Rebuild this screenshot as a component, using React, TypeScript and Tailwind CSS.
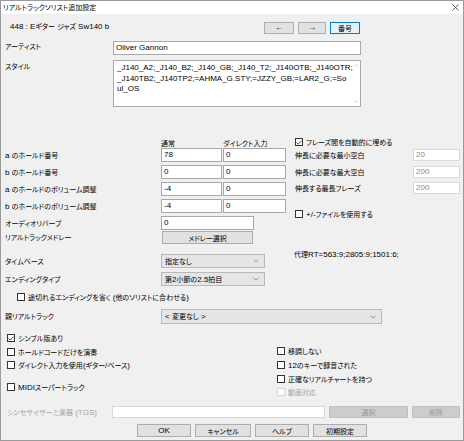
import React from 'react';

const CJK = /([\u3000-\u30ff\u3400-\u9fff\uff00-\uffef]+)/;

// Japanese runs get the narrower CJK face, Latin stays in Liberation Sans
const T = ({ s }: { s: string }) => (
  <>
    {s.split(CJK).map((part, i) =>
      i % 2 === 1 ? (
        <span key={i} className="font-['Noto_Sans_CJK_JP'] text-[7px] [font-feature-settings:'palt']">
          {part}
        </span>
      ) : (
        <React.Fragment key={i}>{part}</React.Fragment>
      ),
    )}
  </>
);

const Check = ({
  label,
  checked = false,
  disabled = false,
  className = '',
}: {
  label: string;
  checked?: boolean;
  disabled?: boolean;
  className?: string;
}) => (
  <div className={`flex items-center h-[10px] ${className}`}>
    <span
      className={`w-[8px] h-[8px] border bg-white flex items-center justify-center shrink-0 ${
        disabled ? 'border-[#d6d6d6]' : 'border-[#333333]'
      }`}
    >
      {checked && (
        <svg width="6" height="5" viewBox="0 0 6 5">
          <path d="M0.4 2.4 L2.2 4.2 L5.6 0.6" stroke="#333" fill="none" strokeWidth="0.9" />
        </svg>
      )}
    </span>
    <span className={`ml-[3px] whitespace-nowrap ${disabled ? 'text-[#a3a3a3]' : ''}`}>
      <T s={label} />
    </span>
  </div>
);

const Field = ({
  value = '',
  className = '',
  dim = false,
}: {
  value?: string;
  className?: string;
  dim?: boolean;
}) => (
  <div
    className={`bg-white border flex items-center pl-[2px] shrink-0 ${
      dim ? 'border-[#d9d9d9] text-[#8a8a8a]' : 'border-[#a8a8a8]'
    } ${className}`}
  >
    {value}
  </div>
);

const Btn = ({
  label,
  className = '',
  disabled = false,
  focus = false,
}: {
  label: string;
  className?: string;
  disabled?: boolean;
  focus?: boolean;
}) => (
  <div
    className={`flex items-center justify-center border shrink-0 ${
      disabled
        ? 'bg-[#cccccc] border-[#bfbfbf] text-[#9a9a9a]'
        : focus
          ? 'bg-[#e5f1fb] border-[#0078d7]'
          : 'bg-[#e1e1e1] border-[#adadad]'
    } ${className}`}
  >
    <T s={label} />
  </div>
);

const Chevron = () => (
  <svg width="6" height="4" viewBox="0 0 6 4" className="shrink-0">
    <path d="M0.6 0.8 L3 3.1 L5.4 0.8" stroke="#808080" fill="none" strokeWidth="0.8" />
  </svg>
);

const Select = ({ value, className = '' }: { value: string; className?: string }) => (
  <div
    className={`bg-[#e5e5e5] border border-[#b9b9b9] flex items-center justify-between pl-[3px] pr-[5px] shrink-0 ${className}`}
  >
    <span className="whitespace-nowrap">
      <T s={value} />
    </span>
    <Chevron />
  </div>
);

const Label = ({ s, className = '' }: { s: string; className?: string }) => (
  <div className={`shrink-0 whitespace-nowrap ${className}`}>
    <T s={s} />
  </div>
);

const holdRows = [
  { label: 'a のホールド番号', a: '78', b: '0' },
  { label: 'b のホールド番号', a: '0', b: '0' },
  { label: 'a のホールドのボリューム調整', a: '-4', b: '0' },
  { label: 'b のホールドのボリューム調整', a: '-4', b: '0' },
];

const stretchRows = [
  { label: '伸長に必要な最小空白', value: '20', mt: 'mt-[2px]' },
  { label: '伸長に必要な最大空白', value: '200', mt: 'mt-[5px]' },
  { label: '伸長する最長フレーズ', value: '200', mt: 'mt-[4px]' },
];

export default function App() {
  return (
    <div className="w-[464px] h-[441px] bg-[#f0f0f0] border border-[#9a9a9a] font-['Liberation_Sans','Noto_Sans_CJK_JP',sans-serif] text-[8px] leading-[8px] text-black flex flex-col overflow-hidden">
      {/* Title bar */}
      <div className="h-[13px] bg-white flex items-center justify-between pl-[2px] pr-[4px] shrink-0">
        <Label s="リアルトラックソリスト追加設定" />
        <svg width="7" height="7" viewBox="0 0 7 7">
          <path d="M0.5 0.5 L6.5 6.5 M6.5 0.5 L0.5 6.5" stroke="#333" strokeWidth="0.8" />
        </svg>
      </div>

      {/* Song line + nav buttons */}
      <div className="flex items-start pl-[9px] mt-[8px] h-[12px]">
        <Label s="448 : Eギター ジャズ Sw140 b" className="w-[254px]" />
        <Btn label="←" className="w-[30px] h-[12px]" />
        <Btn label="→" className="w-[28px] h-[12px] ml-[4px]" />
        <Btn label="番号" focus className="w-[30px] h-[12px] ml-[4px]" />
      </div>

      {/* Artist */}
      <div className="flex items-start pl-[4px] mt-[7px]">
        <Label s="アーティスト" className="w-[108px] pt-[1px]" />
        <Field value="Oliver Gannon" className="w-[248px] h-[14px]" />
      </div>

      {/* Style */}
      <div className="flex items-start pl-[4px] mt-[5px]">
        <Label s="スタイル" className="w-[108px] pt-[2px]" />
        <div className="w-[248px] h-[47px] bg-white border border-[#a8a8a8] flex">
          <div className="flex-1 pl-[3px] pt-[2px] leading-[10.5px] whitespace-nowrap">
            <div>_J140_A2;_J140_B2;_J140_GB;_J140_T2;_J140OTB;_J140OTR;</div>
            <div>_J140TB2;_J140TP2;=AHMA_G.STY;=JZZY_GB;=LAR2_G;=So</div>
            <div>ul_OS</div>
          </div>
          <div className="w-[9px] flex flex-col items-center justify-between py-[3px]">
            <svg width="5" height="3" viewBox="0 0 5 3">
              <path d="M0.5 2.5 L2.5 0.6 L4.5 2.5" stroke="#c2c2c2" fill="none" strokeWidth="0.8" />
            </svg>
            <svg width="5" height="3" viewBox="0 0 5 3">
              <path d="M0.5 0.5 L2.5 2.4 L4.5 0.5" stroke="#c2c2c2" fill="none" strokeWidth="0.8" />
            </svg>
          </div>
        </div>
      </div>

      {/* Middle two columns */}
      <div className="flex items-start">
        <div className="w-[293px] shrink-0 flex flex-col">
          <div className="flex pl-[160px] mt-[32px] h-[8px]">
            <Label s="通常" className="w-[62px]" />
            <Label s="ダイレクト入力" />
          </div>
          {holdRows.map((r, i) => (
            <div key={r.label} className={`flex items-center pl-[4px] ${i === 0 ? 'mt-[1px]' : 'mt-[3px]'}`}>
              <Label s={r.label} className="w-[156px]" />
              <Field value={r.a} className="w-[61px] h-[14px]" />
              <Field value={r.b} className="w-[63px] h-[14px] ml-[1px]" />
            </div>
          ))}
          <div className="flex items-center pl-[4px] mt-[3px]">
            <Label s="オーディオリバーブ" className="w-[156px]" />
            <Field value="0" className="w-[93px] h-[14px]" />
          </div>
          <div className="flex items-center pl-[4px] mt-[1px]">
            <Label s="リアルトラックメドレー" className="w-[157px]" />
            <Btn label="メドレー選択" className="w-[91px] h-[13px]" />
          </div>
          <div className="flex items-center pl-[4px] mt-[10px]">
            <Label s="タイムベース" className="w-[156px]" />
            <Select value="指定なし" className="w-[104px] h-[14px]" />
          </div>
          <div className="flex items-center pl-[4px] mt-[4px]">
            <Label s="エンディングタイプ" className="w-[156px]" />
            <Select value="第2小節の2.5拍目" className="w-[104px] h-[14px]" />
          </div>
          <Check label="途切れるエンディングを省く (他のソリストに合わせる)" className="ml-[16px] mt-[6px]" />
        </div>

        <div className="flex-1 flex flex-col pl-[1px]">
          <Check label="フレーズ間を自動的に埋める" checked className="mt-[30px]" />
          {stretchRows.map((r) => (
            <div key={r.label} className={`flex items-center ${r.mt}`}>
              <Label s={r.label} className="w-[118px]" />
              <Field value={r.value} dim className="w-[47px] h-[12px]" />
            </div>
          ))}
          <Check label="+/-ファイルを使用する" className="mt-[15px]" />
          <Label s="代理RT=563:9;2805:9;1501:6;" className="mt-[31px] -ml-[1px]" />
        </div>
      </div>

      {/* Parent real track */}
      <div className="flex items-center pl-[4px] mt-[7px]">
        <Label s="親リアルトラック" className="w-[156px]" />
        <Select value="< 変更なし >" className="w-[221px] h-[15px]" />
      </div>

      {/* Option checkboxes */}
      <div className="flex items-start">
        <div className="w-[276px] shrink-0 flex flex-col pl-[6px]">
          <Check label="シンプル版あり" checked className="mt-[9px]" />
          <Check label="ホールドコードだけを演奏" className="mt-[4px]" />
          <Check label="ダイレクト入力を使用(ギター/ベース)" className="mt-[3px]" />
          <Check label="MIDIスーパートラック" className="mt-[12px]" />
        </div>
        <div className="flex flex-col">
          <Check label="移調しない" className="mt-[22px]" />
          <Check label="12のキーで録音された" className="mt-[4px]" />
          <Check label="正確なリアルチャートを持つ" className="mt-[4px]" />
          <Check label="動画対応" disabled className="mt-[3px]" />
        </div>
      </div>

      {/* TGS */}
      <div className="flex items-center pl-[6px] mt-[9px]">
        <Label s="シンセサイザーと楽器 (TGS)" className="w-[105px] text-[#a3a3a3]" />
        <Field className="w-[213px] h-[12px] border-[#d9d9d9]" />
        <Btn label="選択" disabled className="w-[79px] h-[12px] ml-[4px]" />
        <Btn label="削除" disabled className="w-[48px] h-[12px] ml-[4px]" />
      </div>

      {/* Dialog buttons */}
      <div className="flex items-center pl-[136px] mt-[6px]">
        <Btn label="OK" className="w-[54px] h-[13px]" />
        <Btn label="キャンセル" className="w-[56px] h-[13px] ml-[4px]" />
        <Btn label="ヘルプ" className="w-[54px] h-[13px] ml-[4px]" />
        <Btn label="初期設定" className="w-[54px] h-[13px] ml-[4px]" />
      </div>
    </div>
  );
}
